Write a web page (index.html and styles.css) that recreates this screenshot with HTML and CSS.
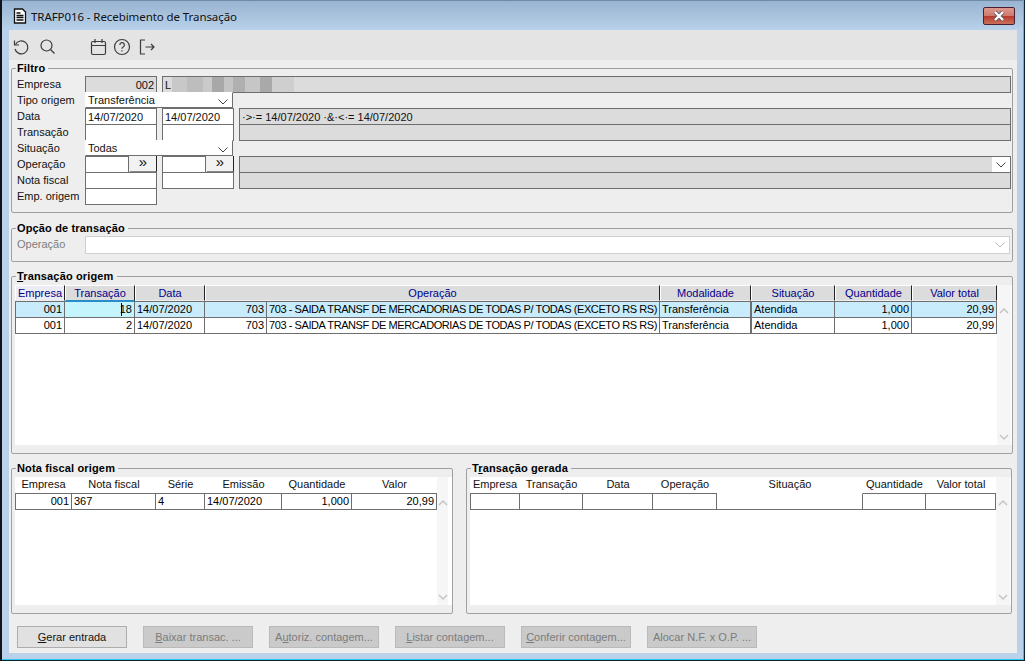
FILE: index.html
```html
<!DOCTYPE html>
<html lang="pt">
<head>
<meta charset="utf-8">
<title>TRAFP016 - Recebimento de Transação</title>
<link rel="stylesheet" href="styles.css">
</head>
<body>
<div class="window">
  <header class="titlebar">
    <svg class="doc" width="16" height="16" viewBox="0 0 16 16"><path d="M2.500 1h8l3 3v11h-11z" fill="#fff" stroke="#111" stroke-width="1.300"/><path d="M4.500 5h4M4.500 7.500h7M4.500 9.500h7M4.500 12h7" stroke="#111" stroke-width="1.300"/></svg>
    <span class="title">TRAFP016 - Recebimento de Transação</span>
    <span class="close"><svg width="14" height="10" viewBox="0 0 14 10"><path d="M3 1l8 8M11 1l-8 8" stroke="#5a5a6a" stroke-width="4"/><path d="M3 1l8 8M11 1l-8 8" stroke="#fff" stroke-width="2.400"/></svg></span>
  </header>
  <div class="client">
    <nav class="toolbar">
      <svg width="18" height="18" viewBox="0 0 18 18" class="ic"><path d="M3.500 6.500A6.500 6.500 0 1 1 3 11"/><path d="M2.500 2.500v4.500h4.500"/></svg>
      <svg width="18" height="18" viewBox="0 0 18 18" class="ic ic-search"><circle cx="7.500" cy="7.500" r="5.500"/><path d="M11.500 11.500l4 4"/></svg>
      <svg width="18" height="18" viewBox="0 0 18 18" class="ic ic-cal"><rect x="1.500" y="3.500" width="14" height="13" rx="1.500"/><path d="M1.500 7.500h14M5 1v4M12 1v4"/></svg>
      <svg width="18" height="18" viewBox="0 0 18 18" class="ic ic-help"><circle cx="9" cy="9" r="7.500"/><path d="M6.800 7a2.300 2.300 0 1 1 3.400 2c-.8.500-1.200.9-1.200 1.800M9 12.300v1.300"/></svg>
      <svg width="18" height="18" viewBox="0 0 18 18" class="ic ic-exit"><path d="M6 2H1.500v14H6M6.500 9h8.500M12 6l3 3-3 3"/></svg>
    </nav>
    <main class="content">
      <fieldset class="group g-filtro">
        <legend>Filtro</legend>
        <div class="frow"><label>Empresa</label><span class="fld ro a num">002</span><span class="fld ro blur-box"><span class="blur-l">L</span><span class="blur"></span></span></div>
        <div class="frow"><label>Tipo origem</label><span class="fld sel">Transferência<svg class="chev" width="10" height="6" viewBox="0 0 10 6"><path d="M.5.500L5 5 9.500.500"/></svg></span></div>
        <div class="frow"><label>Data</label><span class="fld a">14/07/2020</span><span class="fld b">14/07/2020</span><span class="fld ro c dots">·&gt;·= 14/07/2020 ·&amp;·&lt;·= 14/07/2020</span></div>
        <div class="frow"><label>Transação</label><span class="fld a"></span><span class="fld b"></span><span class="fld ro c"></span></div>
        <div class="frow"><label>Situação</label><span class="fld sel">Todas<svg class="chev" width="10" height="6" viewBox="0 0 10 6"><path d="M.5.500L5 5 9.500.500"/></svg></span></div>
        <div class="frow"><label>Operação</label><span class="pair"><span class="fld s"></span><span class="go">»</span></span><span class="pair p2"><span class="fld s"></span><span class="go">»</span></span><span class="fld ro c combo"><span class="cbtn"><svg class="chev" width="10" height="6" viewBox="0 0 10 6"><path d="M.5.500L5 5 9.500.500"/></svg></span></span></div>
        <div class="frow"><label>Nota fiscal</label><span class="fld a"></span><span class="fld b"></span><span class="fld ro c"></span></div>
        <div class="frow"><label>Emp. origem</label><span class="fld a"></span></div>
      </fieldset>

      <fieldset class="group g-opcao">
        <legend>Opção de transação</legend>
        <div class="frow"><label class="off">Operação</label><span class="opt"><svg class="chev off" width="10" height="6" viewBox="0 0 10 6"><path d="M.5.500L5 5 9.500.500"/></svg></span></div>
      </fieldset>

      <fieldset class="group g-origem">
        <legend><u>T</u>ransação origem</legend>
        <div class="tbl t-main">
          <div class="body">
            <div class="gr ghead">
              <span class="hc first">Empresa</span><span class="hc active">Transação</span><span class="hc">Data</span><span class="hc span2">Operação</span><span class="hc">Modalidade</span><span class="hc">Situação</span><span class="hc">Quantidade</span><span class="hc">Valor total</span>
            </div>
            <div class="gr grow sel-row">
              <span class="c r">001</span><span class="c r cur">18</span><span class="c">14/07/2020</span><span class="c r">703</span><span class="c op">703 - SAIDA TRANSF DE MERCADORIAS DE TODAS P/ TODAS (EXCETO RS RS)</span><span class="c">Transferência</span><span class="c thick">Atendida</span><span class="c r">1,000</span><span class="c r">20,99</span>
            </div>
            <div class="gr grow">
              <span class="c r">001</span><span class="c r">2</span><span class="c">14/07/2020</span><span class="c r">703</span><span class="c op">703 - SAIDA TRANSF DE MERCADORIAS DE TODAS P/ TODAS (EXCETO RS RS)</span><span class="c">Transferência</span><span class="c thick">Atendida</span><span class="c r">1,000</span><span class="c r">20,99</span>
            </div>
          </div>
          <div class="sb"><svg width="10" height="7" viewBox="0 0 10 7"><path d="M1 6l4-4 4 4"/></svg><svg width="10" height="7" viewBox="0 0 10 7"><path d="M1 1l4 4 4-4"/></svg></div>
        </div>
      </fieldset>

      <div class="two">
        <fieldset class="group g-nota">
          <legend>Nota fiscal origem</legend>
          <div class="tbl t-nota">
            <div class="body">
              <div class="gr phead"><span>Empresa</span><span>Nota fiscal</span><span>Série</span><span>Emissão</span><span>Quantidade</span><span>Valor</span></div>
              <div class="gr grow"><span class="c r">001</span><span class="c">367</span><span class="c">4</span><span class="c">14/07/2020</span><span class="c r">1,000</span><span class="c r">20,99</span></div>
            </div>
            <div class="sb"><svg width="10" height="7" viewBox="0 0 10 7"><path d="M1 6l4-4 4 4"/></svg><svg width="10" height="7" viewBox="0 0 10 7"><path d="M1 1l4 4 4-4"/></svg></div>
          </div>
        </fieldset>
        <fieldset class="group g-gerada">
          <legend>T<u>r</u>ansação gerada</legend>
          <div class="tbl t-ger">
            <div class="body">
              <div class="gr phead"><span>Empresa</span><span>Transação</span><span>Data</span><span>Operação</span><span>Situação</span><span>Quantidade</span><span>Valor total</span></div>
              <div class="gr grow"><span class="c"></span><span class="c"></span><span class="c"></span><span class="c"></span><span class="c open"></span><span class="c"></span><span class="c"></span></div>
            </div>
            <div class="sb"><svg width="10" height="7" viewBox="0 0 10 7"><path d="M1 6l4-4 4 4"/></svg><svg width="10" height="7" viewBox="0 0 10 7"><path d="M1 1l4 4 4-4"/></svg></div>
          </div>
        </fieldset>
      </div>

      <div class="buttons">
        <button class="btn"><u>G</u>erar entrada</button>
        <button class="btn dis"><u>B</u>aixar transac. ...</button>
        <button class="btn dis">A<u>u</u>toriz. contagem...</button>
        <button class="btn dis"><u>L</u>istar contagem...</button>
        <button class="btn dis"><u>C</u>onferir contagem...</button>
        <button class="btn dis">Alocar N.F. x O.P. ...</button>
      </div>
    </main>
  </div>
</div>
</body>
</html>
```

FILE: styles.css
```css
* { box-sizing: border-box; }
html, body { margin: 0; padding: 0; }
body {
  width: 1025px; height: 661px; overflow: hidden;
  font-family: "Liberation Sans", Arial, sans-serif;
  font-size: 11px; color: #000;
}
.window {
  width: 1025px; height: 661px;
  display: flex; flex-direction: column;
  background: #b9d1ea;
  border-left: 2px solid #101418;
  border-bottom: 1px solid #0c2430;
  border-right: 1px solid #0c2430;
  box-shadow: inset -1px -1px 0 #2cc8ec;
  padding: 0 7px 7px 7px;
}
.titlebar {
  height: 30px; margin: 0 -6px 0 -7px; padding: 1px 8px 0 10px;
  display: flex; align-items: center;
  background: linear-gradient(#99b4d1, #b9d1ea);
  border-top: 1px solid #6f8ba6;
}
.doc { flex: none; }
.title { margin-left: 3px; font-family: "Noto Sans", sans-serif; font-size: 11.500px; letter-spacing: -0.08px; color: #111; }
.close {
  margin-left: auto; width: 32px; height: 18px;
  display: flex; align-items: center; justify-content: center;
  border: 1px solid #4a2030; border-radius: 2px;
  background: linear-gradient(#dc9a8e 0, #cf7a6c 48%, #b83a2c 52%, #c9705c 100%);
}
.client { flex: 1; display: flex; flex-direction: column; background: #eeeeee; }
.toolbar {
  height: 30px; flex: none; background: #e4e4e4;
  display: flex; align-items: center; padding: 4px 0 0 3px;
}
.ic { fill: none; stroke: #3c3c3c; stroke-width: 1.200; flex: none; }
.ic-search { margin-left: 9px; }
.ic-cal { margin-left: 33px; }
.ic-help { margin-left: 5px; }
.ic-exit { margin-left: 8px; }
.content { padding: 2px 4px 0 2px; flex: 1; }

.group {
  margin: 0; padding: 0 4px 0 4px; min-width: 0;
  border: 1px solid #a0a0a0; border-radius: 2px;
}
legend {
  margin-left: 0; padding: 0 3px 0 1px;
  font-weight: bold; font-size: 11px; letter-spacing: 0.15px; line-height: 12px; height: 12px;
}
.g-filtro { height: 151px; padding-top: 2px; }
.g-opcao { height: 40px; margin-top: 9px; padding-top: 2px; }
.g-origem { height: 184px; margin-top: 8px; padding: 3px 0 0 3px; }
.g-origem legend, .g-nota legend, .g-gerada legend { margin-left: 1px; }
.two { display: flex; gap: 13px; margin-top: 8px; }
.g-nota { width: 442px; height: 152px; padding: 3px 0 0 3px; }
.g-gerada { width: 546px; height: 152px; padding: 3px 0 0 3px; }

.frow { display: flex; height: 16px; align-items: flex-start; color: #111; }
.frow label { width: 69px; padding-left: 1px; flex: none; line-height: 16px; }
.frow label.off { color: #7d7d7d; }
.fld {
  display: block; height: 17px; flex: none;
  border: 1px solid #6e6e6e; background: #fff;
  padding: 0 2px; line-height: 16px; white-space: nowrap; overflow: hidden;
}
.ro { background: #dcdcdc; }
.a { width: 72px; }
.b { width: 72px; margin-left: 5px; }
.c.fld, .fld.c { width: 772px; margin-left: 5px; }
.num { text-align: right; }
.blur-box { width: 849px; margin-left: 5px; display: flex; }
.blur {
  width: 122px; height: 15px; margin-left: 1px;
  background:
    linear-gradient(90deg, #c8c8c8 0 12%, #bdbdbd 12% 25%, #cacaca 25% 33%, #a8a8a8 33% 43%, #c4c4c4 43% 50%, #b0b0b0 50% 60%, #c6c6c6 60% 72%, #a9a9a9 72% 82%, #cfcfcf 82% 100%);
  filter: blur(0.6px);
}
.sel {
  position: relative; width: 148px; height: 16px;
  border-color: transparent #6e6e6e #6e6e6e transparent; line-height: 14px;
}
.chev { fill: none; stroke: #444; stroke-width: 1; }
.chev.off { stroke: #b8b8b8; }
.sel .chev { position: absolute; right: 4px; top: 6px; }
.pair { display: flex; width: 72px; flex: none; height: 17px; }
.p2 { margin-left: 5px; }
.fld.s { width: 44px; }
.go {
  width: 27px; height: 16px; margin-left: 1px;
  background: #f2f2f2; border-right: 1px solid #222; border-bottom: 1px solid #888;
  text-align: center; line-height: 12px; font-size: 15px;
}
.combo { display: flex; justify-content: flex-end; padding: 0; }
.cbtn { width: 18px; background: #fff; display: flex; align-items: center; justify-content: center; }
.opt {
  width: 925px; height: 18px; flex: none; margin-top: 0; background: #fff;
  border: 1px solid #cfcfcf; display: flex; align-items: center; justify-content: flex-end; padding-right: 4px;
}

.tbl { display: flex; background: #fff; }
.body { flex: none; }
.sb {
  background: #f6f6f6; flex: none;
  display: flex; flex-direction: column; justify-content: space-between; align-items: center;
  padding: 22px 0 4px;
}
.sb svg { fill: none; stroke: #c4c4c4; stroke-width: 1.500; }
.gr { display: grid; }
.t-main { height: 160px; }
.t-main .body { width: 982px; }
.t-main .sb { width: 14px; }
.t-main .gr { grid-template-columns: 50px 70px 70px 62px 393px 91px 84px 77px 85px; }
.ghead { height: 16px; }
.hc {
  background: #dcdcdc; color: #00008c; text-align: center; line-height: 14px;
  border-top: 1px solid #fff; border-left: 1px solid #fff; border-right: 1px solid #222; border-bottom: 1px solid #eee;
  height: 16px; white-space: nowrap;
}
.hc.first { background: #ecedf4; }
.hc.active { border-bottom: 1px solid #2a8cc8; }
.span2 { grid-column: span 2; }
.grow { height: 17px; margin-bottom: -1px; }
.grow .c {
  border-top: 1px solid #6e6e6e; border-bottom: 1px solid #6e6e6e; border-right: 1px solid #6e6e6e;
  padding: 0 2px 0 2px; line-height: 15px; white-space: nowrap; overflow: hidden; background: #fff;
}
.grow .c:first-child { border-left: 1px solid #6e6e6e; }
.grow .thick { border-left: 1px solid #6e6e6e; }
.grow .open { border-top-color: transparent; }
.grow .op { letter-spacing: -0.42px; padding-right: 0; }
.r { text-align: right; }
.sel-row .c { background: #c8ecfc; }
.sel-row .cur { background: #c4f4fc; border-top-color: #2a8cc8; position: relative; }
.sel-row .cur::before { content: ""; position: absolute; left: 56px; top: 1px; width: 1px; height: 13px; background: #000; }

.phead { height: 16px; text-align: center; line-height: 14px; color: #111; }
.t-nota { height: 128px; }
.t-nota .body { width: 422px; }
.t-nota .sb { width: 11px; }
.t-nota .gr { grid-template-columns: 57px 84px 49px 77px 70px 85px; }
.t-ger { height: 128px; }
.t-ger .body { width: 526px; }
.t-ger .sb { width: 14px; }
.t-ger .gr { grid-template-columns: 50px 63px 70px 64px 146px 63px 70px; }

.buttons { display: flex; gap: 16px; margin-top: 12px; padding-left: 6px; }
.btn {
  width: 110px; height: 22px; padding: 0; flex: none;
  font: 11px "Liberation Sans", Arial, sans-serif; color: #111;
  background: #e1e1e1; border: 1px solid #adadad; border-radius: 0;
}
.dis { background: #cacaca; border-color: #bababa; color: #7c7c7c; }
```
